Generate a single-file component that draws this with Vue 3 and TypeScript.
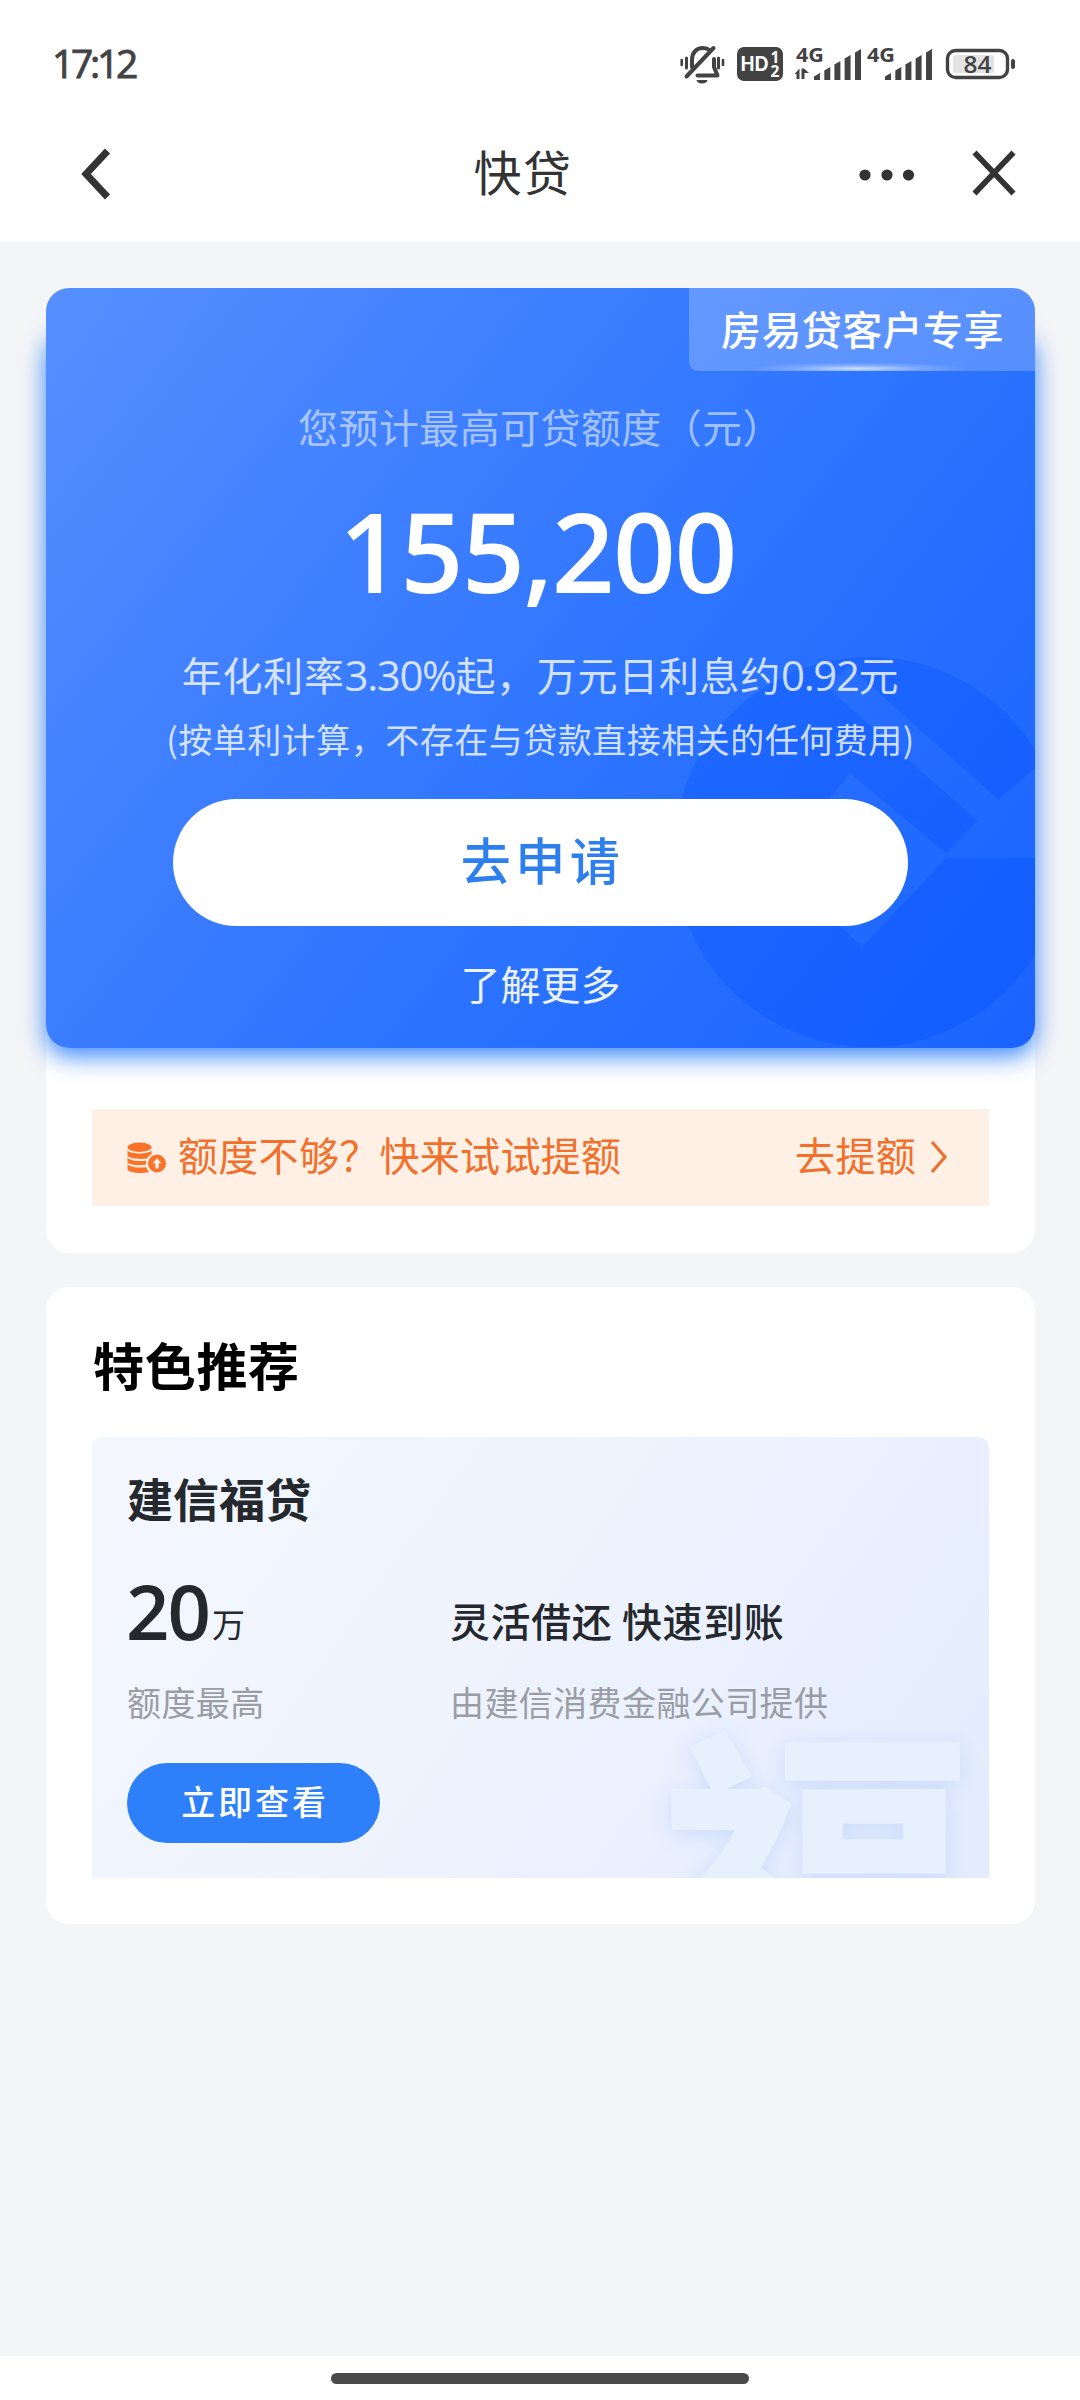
<script setup lang="ts">
interface SignalBar {
  x: number
  top: number
}

const signalBars: SignalBar[] = [
  { x: 0, top: 26 },
  { x: 10.3, top: 20 },
  { x: 20.4, top: 14 },
  { x: 30.6, top: 8 },
  { x: 41, top: 2 },
]

function barPath(bar: SignalBar): string {
  return `M${bar.x} ${bar.top + 3.5}l6 -3.5V33h-6z`
}

const offer = {
  badge: '房易贷客户专享',
  label: '您预计最高可贷额度（元）',
  amount: '155,200',
  note: '(按单利计算，不存在与贷款直接相关的任何费用)',
}
</script>

<template>
  <div class="screen">
    <header class="top">
      <div class="status">
        <span class="clock">17:12</span>
        <svg class="status-icons" width="340" height="50" viewBox="0 0 340 50">
          <g fill="none" stroke="#434343" stroke-width="4" stroke-linecap="round">
            <path d="M12 27V20C12 12 17 8 22.500 8c3 0 6 1 8 2.500" />
            <path d="M34 19v8l3.500 8.500H17.500" stroke-linejoin="round" />
            <path d="M6.500 36.500 33.500 8" />
            <path d="M6.500 18v10M38.500 18v10" stroke-width="3" />
            <path d="M1.700 20v5M43 20v5" stroke-width="2.600" />
          </g>
          <path d="M16.500 40h11a5.500 3.500 0 0 1-11 0z" fill="#434343" />
          <rect x="57" y="7" width="46" height="34" rx="7" fill="#434343" />
          <text x="60.500" y="31.300" class="hd" textLength="28" lengthAdjust="spacingAndGlyphs">HD</text>
          <text x="90.500" y="22.500" class="sim">1</text>
          <text x="90.500" y="37" class="sim">2</text>
          <text x="116" y="22" class="net" textLength="28" lengthAdjust="spacingAndGlyphs">4G</text>
          <path d="M114.500 34l5-5.500v10.500h-3V34zM121.500 28.500V39h3v-6h4.500l-5-4.500z" fill="#434343" />
          <g transform="translate(134 7)" fill="#434343">
            <path v-for="bar in signalBars" :key="bar.x" :d="barPath(bar)" />
          </g>
          <text x="187" y="22" class="net" textLength="28" lengthAdjust="spacingAndGlyphs">4G</text>
          <g transform="translate(205 7)" fill="#434343">
            <path v-for="bar in signalBars" :key="bar.x" :d="barPath(bar)" />
          </g>
          <rect x="267.500" y="10.500" width="60" height="27" rx="8" fill="none" stroke="#434343" stroke-width="3.400" />
          <rect x="273" y="15" width="41" height="18" rx="3" fill="#e3e3e3" />
          <rect x="331" y="19" width="4" height="10" rx="2" fill="#434343" />
          <text x="283.500" y="32.500" class="battery" textLength="28" lengthAdjust="spacingAndGlyphs">84</text>
        </svg>
      </div>
      <nav class="nav">
        <svg width="40" height="60" viewBox="0 0 40 60" class="back">
          <path d="M29.500 7 8 30l21.500 23" fill="none" stroke="#333" stroke-width="7" />
        </svg>
        <h1 class="title">快贷</h1>
        <div class="nav-actions">
          <svg class="dots" width="56" height="12" viewBox="0 0 56 12">
            <circle cx="6" cy="6" r="5.600" fill="#333" />
            <circle cx="28" cy="6" r="5.600" fill="#333" />
            <circle cx="49.500" cy="6" r="5.600" fill="#333" />
          </svg>
          <svg width="44" height="46" viewBox="0 0 44 46">
            <path d="M2.500 2.500l39 41M41.500 2.500l-39 41" fill="none" stroke="#333" stroke-width="5.600" />
          </svg>
        </div>
      </nav>
    </header>

    <main class="content">
      <section class="card loan">
        <div class="hero">
          <svg class="mark" width="400" height="400" viewBox="0 0 400 400">
            <defs>
              <mask id="gaps">
                <circle cx="196" cy="200" r="195" fill="#fff" />
                <path d="M165 25 345 185" stroke="#000" stroke-width="30" />
                <path d="M177 121 273 201 318 155 380 100V206H273L189 295 104 213z" fill="#000" />
              </mask>
            </defs>
            <rect width="400" height="400" fill="#004dff" fill-opacity=".28" mask="url(#gaps)" />
          </svg>
          <div class="badge">{{ offer.badge }}</div>
          <p class="label">{{ offer.label }}</p>
          <p class="amount">{{ offer.amount }}</p>
          <p class="rate">年化利率<span class="num">3.30%</span>起，万元日利息约<span class="num">0.92</span>元</p>
          <p class="note">{{ offer.note }}</p>
          <button class="apply" type="button">去申请</button>
          <a class="more">了解更多</a>
        </div>
        <div class="raise">
          <svg width="40" height="32" viewBox="0 0 40 32" fill="#fb7229">
            <ellipse cx="12.500" cy="5.200" rx="12" ry="4.700" />
            <path d="M.500 8.500c3 4 21 4 24 0v3.800c-2 1-4 3-4.600 4.200C12 17.500 2 16.500 .500 13.500z" />
            <path d="M.500 15.500c3 3.500 12 4.200 18.600 3.200v3.900C10 24 2 22.500 .500 20.200z" />
            <path d="M.500 22c3 3.500 12 4.200 18.900 3.200.6 2 1.600 3.500 2.600 4.800C14 32 2 31 .500 27.500z" />
            <path fill-rule="evenodd" d="M30 12.500a9 9 0 1 1 0 18 9 9 0 0 1 0-18zm0 3.800-4.500 5h2.800v5.200h3.400v-5.200h2.800z" />
          </svg>
          <span class="raise-text">额度不够？快来试试提额</span>
          <span class="raise-link">去提额</span>
          <svg width="18" height="34" viewBox="0 0 18 34">
            <path d="M2 1l13 15L2 31" fill="none" stroke="#ee702f" stroke-width="3.200" />
          </svg>
        </div>
      </section>

      <section class="card featured">
        <h2 class="section-title">特色推荐</h2>
        <article class="product">
          <span class="fu" aria-hidden="true">福</span>
          <h3 class="product-name">建信福贷</h3>
          <div class="facts">
            <div class="fact limit">
              <p class="limit-value"><span class="big">20</span><span class="unit">万</span></p>
              <p class="caption">额度最高</p>
            </div>
            <div class="fact">
              <p class="slogan">灵活借还 快速到账</p>
              <p class="caption">由建信消费金融公司提供</p>
            </div>
          </div>
          <button class="view" type="button">立即查看</button>
        </article>
      </section>
    </main>

    <footer class="home"><span class="home-bar"></span></footer>
  </div>
</template>

<style>
body {
  margin: 0;
}
</style>

<style scoped>
.screen {
  width: 1080px;
  height: 2400px;
  display: flex;
  flex-direction: column;
  background: #f4f5f7;
  font-family: "Noto Sans CJK SC", sans-serif;
  overflow: hidden;
}

p,
h1,
h2,
h3 {
  margin: 0;
  font-weight: 400;
  white-space: nowrap;
}

button {
  border: 0;
  padding: 0;
  font-family: inherit;
}

.top {
  height: 242px;
  background: #fff;
  flex: none;
}

.status {
  height: 104px;
  padding: 0 60px 0 52px;
  display: flex;
  align-items: flex-start;
  justify-content: space-between;
  box-sizing: border-box;
}

.clock {
  margin-top: 38px;
  font: 500 39px/50px "Open Sans", sans-serif;
  letter-spacing: -3.3px;
  color: #434343;
  -webkit-text-stroke: 0.9px #434343;
}

.status-icons {
  margin-top: 40px;
}

.hd {
  font: 900 21px Lato, sans-serif;
  fill: #fff;
}

.sim {
  font: 700 15.5px "Open Sans", sans-serif;
  fill: #fff;
}

.net {
  font: 700 20px "Open Sans", sans-serif;
  fill: #434343;
}

.battery {
  font: 600 23px "Open Sans", sans-serif;
  fill: #434343;
}

.nav {
  height: 138px;
  display: grid;
  grid-template-columns: 1fr auto 1fr;
  align-items: center;
  padding: 0 64px 0 78px;
}

.back {
  margin-top: 1px;
}

.title {
  margin: -6px 0 0;
  padding-right: 48px;
  font-size: 48px;
  line-height: 64px;
  letter-spacing: 1.5px;
  color: #333;
}

.nav-actions {
  display: flex;
  align-items: center;
  justify-content: flex-end;
  gap: 57px;
}

.dots {
  margin-top: 3px;
}

.content {
  flex: 1;
  padding: 46px 45px 0 46px;
  display: flex;
  flex-direction: column;
  gap: 34px;
}

.card {
  background: #fff;
  border-radius: 23px;
}

.loan {
  height: 965px;
}

.hero {
  position: relative;
  height: 760px;
  display: flex;
  flex-direction: column;
  align-items: center;
}

.hero::before {
  content: "";
  position: absolute;
  z-index: 0;
  inset: 41px 0 0;
  border-radius: 23px;
  box-shadow: 0 8px 24px rgba(45, 128, 249, 0.95);
}

.hero::after {
  content: "";
  position: absolute;
  z-index: 1;
  inset: 0;
  border-radius: 23px;
  background: linear-gradient(128deg, #5690ff 0%, #3e7fff 33%, #2b73ff 60%, #1a63ff 100%);
}

.hero > * {
  position: relative;
  z-index: 2;
}

.hero .mark {
  position: absolute;
  left: 627px;
  top: 364px;
  clip-path: inset(0 38px 0 0);
}

.hero .badge {
  position: absolute;
  right: 0;
  top: 0;
  width: 346px;
  height: 83px;
  box-sizing: border-box;
  padding-left: 32px;
  border-radius: 0 23px 0 9px;
  background: radial-gradient(ellipse 110px 6px at 49% 97%, rgba(255, 255, 255, 0.7), rgba(255, 255, 255, 0.2) 55%, transparent), rgba(255, 255, 255, 0.22);
  color: #fff;
  font-size: 40px;
  line-height: 81px;
  font-weight: 500;
  letter-spacing: 0.4px;
  white-space: nowrap;
}

.label {
  margin-top: 108px;
  font-size: 40px;
  line-height: 60px;
  letter-spacing: 0.4px;
  color: rgba(255, 255, 255, 0.55);
}

.amount {
  margin: 34px 6px 0 0;
  font: 600 110px/120px "Open Sans", sans-serif;
  letter-spacing: -1.5px;
  color: #fff;
}

.rate {
  margin-top: 34px;
  font-size: 40px;
  line-height: 60px;
  letter-spacing: 0.7px;
  color: rgba(255, 255, 255, 0.78);
}

.num {
  font-family: "Open Sans", sans-serif;
  font-size: 42px;
  line-height: 1;
  letter-spacing: -1.4px;
}

.note {
  margin-top: 10px;
  font-size: 34px;
  line-height: 50px;
  letter-spacing: 0.5px;
  color: rgba(255, 255, 255, 0.78);
}

.apply {
  margin-top: 35px;
  width: 735px;
  height: 127px;
  flex: none;
  box-sizing: border-box;
  padding: 0 0 8px 4px;
  border-radius: 64px;
  background: #fff;
  color: #2e7fee;
  font-size: 50px;
  line-height: 119px;
  font-weight: 500;
  letter-spacing: 4.5px;
}

.more {
  margin-top: 27px;
  font-size: 40px;
  line-height: 60px;
  color: rgba(255, 255, 255, 0.92);
}

.raise {
  margin: 61px 46px 0;
  height: 97px;
  padding: 0 41px 0 35px;
  display: flex;
  align-items: center;
  background: #fff0e6;
  color: #f2702c;
  font-size: 40px;
  line-height: 60px;
  letter-spacing: 0.3px;
}

.raise-text {
  margin: -8px auto 0 11px;
}

.raise-link {
  margin: -8px 14px 0 0;
}

.featured {
  height: 637px;
  display: flex;
  flex-direction: column;
}

.section-title {
  margin: 43px 0 0 47px;
  font-size: 51px;
  line-height: 68px;
  font-weight: 700;
  letter-spacing: 0.7px;
  color: #000;
}

.product {
  position: relative;
  margin: 39px 46px 0;
  height: 441px;
  box-sizing: border-box;
  padding: 30px 0 0 35px;
  border-radius: 11px 11px 0 0;
  background: linear-gradient(125deg, #f4f7fe 0%, #eff4fe 40%, #eaf0fe 68%, #e3ebfd 100%);
  overflow: hidden;
}

.product > * {
  position: relative;
}

.product .fu {
  position: absolute;
  right: 14px;
  top: 268px;
  font-size: 318px;
  line-height: 318px;
  font-weight: 900;
  color: #e7f1fe;
  text-shadow: 0 4px 20px rgba(170, 200, 250, 0.45);
}

.product-name {
  font-size: 46px;
  line-height: 60px;
  font-weight: 700;
  letter-spacing: 0;
  color: #25282c;
}

.facts {
  display: flex;
  margin-top: 44px;
}

.limit {
  width: 323px;
}

.limit-value {
  height: 82px;
  display: flex;
  align-items: baseline;
  color: #25282c;
}

.big {
  font: 600 76px/80px "Open Sans", sans-serif;
  letter-spacing: -2px;
  margin-left: -1px;
}

.unit {
  margin-left: 3px;
  font-size: 33px;
  line-height: 40px;
  transform: translateY(-3px);
}

.slogan {
  height: 82px;
  box-sizing: border-box;
  padding-top: 19px;
  font-size: 40px;
  line-height: 60px;
  font-weight: 500;
  letter-spacing: 0.6px;
  color: #25282c;
}

.caption {
  margin-top: 24px;
  font-size: 34px;
  line-height: 50px;
  letter-spacing: 0.4px;
  color: #9a9da4;
}

.view {
  display: block;
  margin-top: 36px;
  width: 253px;
  height: 80px;
  box-sizing: border-box;
  padding: 0 0 5px 3px;
  border-radius: 40px;
  background: #2d80f9;
  color: #fff;
  font-size: 34px;
  line-height: 75px;
  font-weight: 500;
  letter-spacing: 2.9px;
}

.home {
  flex: none;
  height: 44px;
  background: #fff;
  display: flex;
  justify-content: center;
}

.home-bar {
  width: 418px;
  height: 11px;
  margin-top: 17px;
  border-radius: 6px;
  background: #4a4a4a;
}
</style>
